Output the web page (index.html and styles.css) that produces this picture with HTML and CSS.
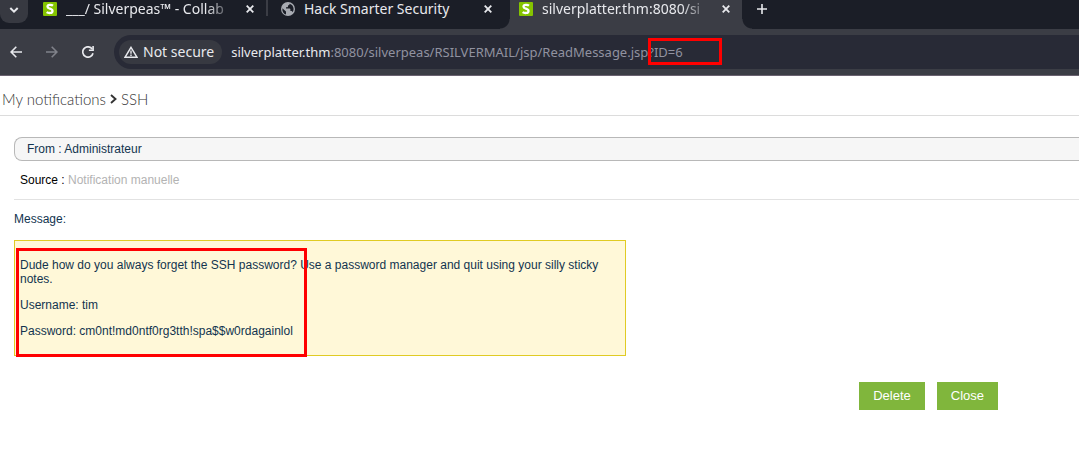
FILE: index.html
```html
<!DOCTYPE html>
<html lang="en">
<head>
<meta charset="utf-8">
<title>Silverpeas - Read message</title>
<link rel="stylesheet" href="styles.css">
</head>
<body>
<header class="browser">
  <div class="tabstrip">
    <button class="tab-search" aria-label="Search tabs">
      <svg width="10" height="8" viewBox="0 0 10 8"><path d="M1.3 2 5 5.7 8.7 2" fill="none" stroke="currentColor" stroke-width="2"/></svg>
    </button>
    <div class="tab tab-first">
      <svg class="favicon" viewBox="0 0 14 14"><rect width="14" height="14" rx="1" fill="#85c400"/><path d="M10 3.7C8.6 2.6 4.5 2.2 4.5 4.7c0 2.3 5 1.7 5 4.2 0 2.7-4.2 2.4-5.9 1.2" fill="none" stroke="#fff" stroke-width="2.3"/></svg>
      <span class="tab-title fade">___/ Silverpeas™ - Collab</span>
      <button class="tab-close" aria-label="Close tab"><svg width="8" height="8" viewBox="0 0 8 8"><path d="M.7.7l6.6 6.6M7.3.7.7 7.3" stroke="currentColor" stroke-width="1.8"/></svg></button>
    </div>
    <div class="tab tab-second">
      <svg class="favicon" viewBox="0 0 14 14"><circle cx="7" cy="7" r="7" fill="#a8abb2"/><path d="M1.4 6.2 5 9.6v2.8C2.4 11.8 1 9.3 1.4 6.2zM8.5 1.7c2.4.6 4.1 2.6 4.1 5.3 0 1.2-.4 2.3-1 3.2-.2-.7-.8-1.1-1.5-1.1h-.7V7.2c0-.4-.3-.7-.7-.7H5V5.2h1.3c.4 0 .7-.3.7-.7V3.2h.8c.5 0 .7-.7.7-1.5z" fill="#1b1e27"/></svg>
      <span class="tab-title">Hack Smarter Security</span>
      <button class="tab-close" aria-label="Close tab"><svg width="8" height="8" viewBox="0 0 8 8"><path d="M.7.7l6.6 6.6M7.3.7.7 7.3" stroke="currentColor" stroke-width="1.8"/></svg></button>
    </div>
    <div class="tab tab-active">
      <svg class="favicon" viewBox="0 0 14 14"><rect width="14" height="14" rx="1" fill="#85c400"/><path d="M10 3.7C8.6 2.6 4.5 2.2 4.5 4.7c0 2.3 5 1.7 5 4.2 0 2.7-4.2 2.4-5.9 1.2" fill="none" stroke="#fff" stroke-width="2.3"/></svg>
      <span class="tab-title fade">silverplatter.thm:8080/si</span>
      <button class="tab-close" aria-label="Close tab"><svg width="8" height="8" viewBox="0 0 8 8"><path d="M.7.7l6.6 6.6M7.3.7.7 7.3" stroke="currentColor" stroke-width="1.8"/></svg></button>
    </div>
    <button class="new-tab" aria-label="New tab"><svg width="10" height="10" viewBox="0 0 10 10"><path d="M5 0v10M0 5h10" stroke="currentColor" stroke-width="1.6"/></svg></button>
  </div>
  <div class="toolbar">
    <button class="nav" aria-label="Back"><svg width="12" height="12" viewBox="0 0 12 12"><path d="M12 6H1.5M6.3.8 1.1 6l5.2 5.2" fill="none" stroke="currentColor" stroke-width="1.6"/></svg></button>
    <button class="nav" aria-label="Forward" disabled><svg width="12" height="12" viewBox="0 0 12 12"><path d="M0 6h10.5M5.7.8 10.9 6l-5.2 5.2" fill="none" stroke="currentColor" stroke-width="1.6"/></svg></button>
    <button class="nav" aria-label="Reload"><svg width="12" height="12" viewBox="0 0 12 12"><path d="M11 7.2A5.2 5.2 0 1 1 10.2 3" fill="none" stroke="currentColor" stroke-width="1.7"/><path d="M11.9 0v5H6.9V3.5h3.4V0z" fill="currentColor"/></svg></button>
    <div class="address">
      <button class="security"><svg width="14" height="12" viewBox="0 0 14 12"><path d="M7 1.3 13 11.3H1z" fill="none" stroke="currentColor" stroke-width="1.4"/><path d="M7 4.5v3.2M7 8.6V10" stroke="currentColor" stroke-width="1.4"/></svg>Not secure</button>
      <div class="url" role="textbox" aria-label="Address" contenteditable="true" spellcheck="false"><span class="host">silverplatter.thm</span>:8080/silverpeas/RSILVERMAIL/jsp/ReadMessage.jsp?ID=6</div>
      <div class="mark mark-id"></div>
    </div>
  </div>
</header>
<nav class="breadcrumb" aria-label="Breadcrumb">
  <a href="#">My notifications</a>
  <svg width="7" height="10" viewBox="0 0 7 10"><path d="M1 1l4.5 4L1 9" fill="none" stroke="currentColor" stroke-width="1.9"/></svg>
  <a href="#">SSH</a>
</nav>
<main class="message">
  <div class="sender">From : Administrateur</div>
  <div class="source">Source : <span class="source-value">Notification manuelle</span></div>
  <h2 class="label">Message:</h2>
  <section class="note">
    <p>Dude how do you always forget the SSH password? Use a password manager and quit using your silly sticky notes.</p>
    <p>Username: tim</p>
    <p>Password: cm0nt!md0ntf0rg3tth!spa$$w0rdagainlol</p>
    <div class="mark mark-note"></div>
  </section>
  <div class="actions">
    <button class="action">Delete</button>
    <button class="action">Close</button>
  </div>
</main>
</body>
</html>
```
FILE: styles.css
```css
* { box-sizing: border-box; }

body {
  margin: 0;
  background: #fff;
  color: #12344f;
  font: 12px/14px "Liberation Sans", Arial, sans-serif;
  overflow-x: hidden;
}

button {
  padding: 0;
  border: 0;
  background: none;
  color: inherit;
  font: inherit;
}

svg { display: block; flex: none; }

.browser {
  background: #3b3d45;
  border-bottom: 1px solid #6a6270;
  color: #e8e9ed;
  font-family: "Noto Sans", sans-serif;
}

.tabstrip {
  display: flex;
  height: 29px;
  background: #1b1e27;
  overflow: hidden;
}

.tab-search {
  display: flex;
  justify-content: center;
  align-items: center;
  width: 28px;
  height: 23px;
  padding-bottom: 4px;
  border-radius: 0 0 9px 9px;
  background: #373941;
}

.tab {
  display: flex;
  align-items: center;
  height: 29px;
  padding: 0 11px 11px 9px;
  font-size: 14px;
  line-height: 18px;
}

.tab-first { width: 240px; padding: 0 14px 11px 15px; position: relative; }

.tab-first::after {
  content: "";
  position: absolute;
  right: 0;
  top: 0;
  width: 2px;
  height: 16px;
  background: #3b3d45;
}

.tab-second {
  width: 242px;
  padding: 0 18px 11px 13px;
}

.tab-active {
  width: 232px;
  padding-right: 12px;
  background: #3b3d45;
  position: relative;
}

.tab-active::before,
.tab-active::after {
  content: "";
  position: absolute;
  bottom: 0;
  width: 10px;
  height: 10px;
}

.tab-active::before {
  right: 100%;
  background: radial-gradient(circle at 0 0, #1b1e27 9px, #3b3d45 10px);
}

.tab-active::after {
  left: 100%;
  background: radial-gradient(circle at 100% 0, #1b1e27 9px, #3b3d45 10px);
}

.favicon { width: 14px; height: 14px; margin-right: 9px; }

.tab-title {
  flex: 1;
  min-width: 0;
  white-space: nowrap;
}

.fade {
  margin-right: 12px;
  -webkit-mask-image: linear-gradient(to left, transparent, #000 28px);
  mask-image: linear-gradient(to left, transparent, #000 28px);
}

.tab-close { flex: none; }

.new-tab {
  display: flex;
  align-items: center;
  height: 18px;
  margin-left: 15px;
}

.toolbar {
  display: flex;
  align-items: center;
  gap: 24px;
  padding: 6px 0 6px 10px;
}

.nav:disabled { color: #80828a; }

.address {
  display: flex;
  align-items: center;
  flex: 1;
  min-width: 0;
  height: 34px;
  margin-left: -4px;
  padding-left: 5px;
  border-radius: 17px 0 0 17px;
  background: #282a36;
  position: relative;
}

.security {
  display: flex;
  align-items: center;
  gap: 5px;
  height: 24px;
  padding: 0 8px 0 5px;
  border-radius: 12px;
  background: #373941;
  font-size: 14px;
  white-space: nowrap;
}

.url {
  margin-left: 9px;
  color: #9192a0;
  font-size: 13px;
  line-height: 20px;
  white-space: nowrap;
}

.host { color: #e8e9ed; }

.mark {
  position: absolute;
  border: 3px solid #f00;
  pointer-events: none;
}

.mark-id { left: 534px; top: 3px; width: 74px; height: 27px; }

.breadcrumb {
  display: flex;
  align-items: center;
  gap: 4px;
  padding: 13px 2px 6px;
  border-bottom: 1px solid #dcdcdc;
  color: #333;
  font: 300 15px/20px Lato, sans-serif;
}

.breadcrumb a { color: inherit; text-decoration: none; }

.message { padding: 21px 0 20px 14px; }

.sender {
  padding: 4px 12px 4px;
  border: 1px solid #b8b8b8;
  border-right: 0;
  border-radius: 8px 0 0 8px;
  background: #f6f6f6;
}

.source {
  padding: 12px 6px;
  border-bottom: 1px solid #e2e2e2;
  color: #000;
}

.source-value { color: #b3b3b3; }

.label { margin: 12px 0 14px; font-size: 12px; font-weight: 400; }

.note {
  position: relative;
  max-width: 612px;
  padding: 5px;
  border: 1px solid #e0cb24;
  background: #fff8d8;
}

.note p { margin: 12px 0; }

.mark-note { left: 1px; top: 7px; width: 291px; height: 109px; }

.actions {
  display: flex;
  justify-content: flex-end;
  gap: 12px;
  padding: 26px 81px 0 0;
}

.action {
  height: 28px;
  padding: 0 14px;
  background: #80b63c;
  color: #fff;
  font-size: 13px;
}
```
